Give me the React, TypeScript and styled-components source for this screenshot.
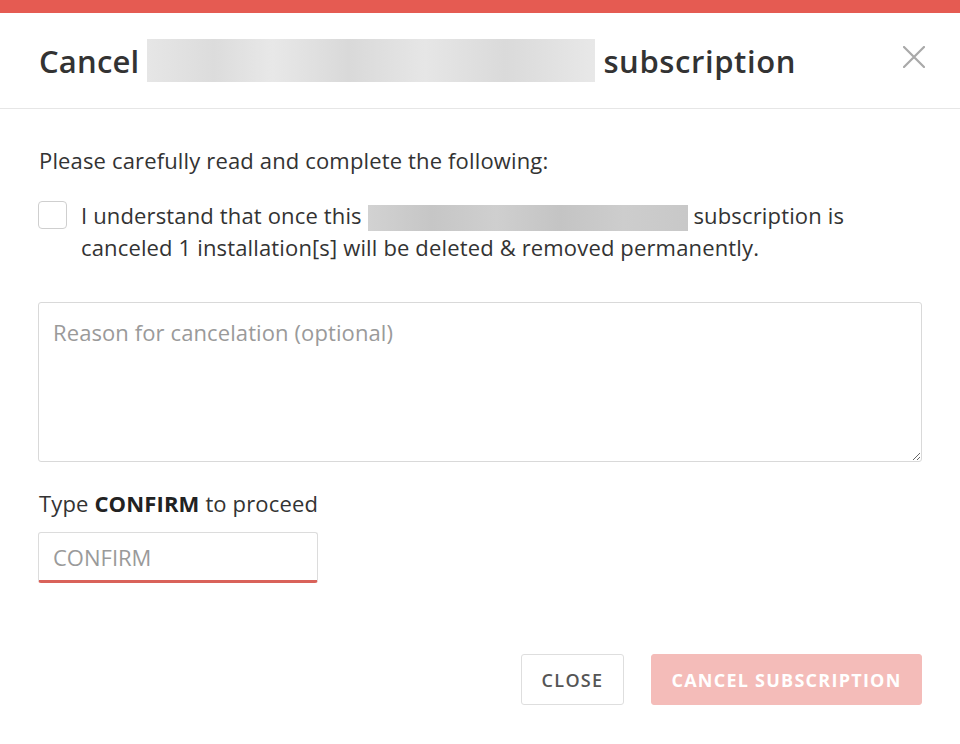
import React from "react";
import styled, { createGlobalStyle } from "styled-components";

const Global = createGlobalStyle`
  html, body { margin: 0; padding: 0; background: #ffffff; }
  body { font-family: "Open Sans", "Noto Sans", sans-serif; }
  * { box-sizing: border-box; }
`;

const Modal = styled.div`
  width: 960px;
  height: 744px;
  background: #fff;
  border-top: 13px solid #e55b52;
  display: flex;
  flex-direction: column;
  color: #333;
`;

const Header = styled.div`
  height: 96px;
  border-bottom: 1px solid #e6e6e6;
  display: flex;
  align-items: center;
  justify-content: space-between;
  padding: 0 34px 0 39px;
`;

const Title = styled.h1`
  margin: 0;
  font-size: 31px;
  font-weight: 600;
  color: #333;
  display: flex;
  align-items: center;
  gap: 8px;
  letter-spacing: 0.2px;
`;

const TitleWord = styled.span<{ $spacing?: number }>`
  letter-spacing: ${(p) => p.$spacing ?? 0.2}px;
`;

const Redacted = styled.span<{ $w: number; $h: number; $tone: "light" | "dark" }>`
  display: inline-block;
  width: ${(p) => p.$w}px;
  height: ${(p) => p.$h}px;
  vertical-align: middle;
  background: ${(p) =>
    p.$tone === "light"
      ? "linear-gradient(90deg, #e6e6e6 0%, #dcdcdc 15%, #e8e8e8 28%, #d9d9d9 45%, #e6e6e6 62%, #dadada 80%, #e8e8e8 100%)"
      : "linear-gradient(90deg, #d2d2d2 0%, #c6c6c6 20%, #cfcfcf 40%, #c4c4c4 60%, #cdcdcd 80%, #c8c8c8 100%)"};
  filter: blur(0.5px);
`;

const CloseX = styled.button`
  border: none;
  background: none;
  padding: 0;
  width: 24px;
  height: 24px;
  cursor: pointer;
  margin-top: -8px;
  display: flex;
  align-items: center;
  justify-content: center;
`;

const Body = styled.div`
  flex: 1;
  padding: 36px 38px 0 38px;
  display: flex;
  flex-direction: column;
`;

const Lead = styled.p`
  margin: 0 0 0 1px;
  font-size: 22px;
  line-height: 30px;
  letter-spacing: 0.15px;
  color: #333;
`;

const CheckRow = styled.label`
  margin-top: 25px;
  display: flex;
  align-items: flex-start;
  gap: 14px;
`;

const Box = styled.span`
  flex: none;
  width: 29px;
  height: 28px;
  border: 1px solid #cfcfcf;
  border-radius: 4px;
  margin-top: 1px;
  background: #fff;
`;

const CheckText = styled.span`
  font-size: 22px;
  line-height: 32px;
  letter-spacing: 0.15px;
  color: #333;
  margin-top: -1px;
`;

const Reason = styled.textarea`
  margin-top: 39px;
  width: 884px;
  height: 160px;
  border: 1px solid #d9d9d9;
  border-radius: 3px;
  padding: 14px 14px;
  font-family: "Open Sans", "Noto Sans", sans-serif;
  font-size: 22px;
  letter-spacing: 0.1px;
  color: #333;
  resize: vertical;
  outline: none;
  &::placeholder { color: #9a9a9a; }
`;

const Prompt = styled.p`
  margin: 26px 0 0 1px;
  font-size: 22px;
  line-height: 30px;
  letter-spacing: 0.15px;
  color: #333;
  b { font-weight: 700; color: #222; }
`;

const ConfirmInput = styled.input`
  margin-top: 14px;
  width: 280px;
  height: 51px;
  border: 1px solid #dcdcdc;
  border-bottom: 3px solid #d9625a;
  border-radius: 3px;
  padding: 0 14px;
  font-family: "Open Sans", "Noto Sans", sans-serif;
  font-size: 22px;
  color: #333;
  outline: none;
  &::placeholder { color: #9a9a9a; }
`;

const Footer = styled.div`
  display: flex;
  justify-content: flex-end;
  gap: 27px;
  padding: 0 38px 39px 0;
`;

const Button = styled.button<{ $primary?: boolean }>`
  height: 51px;
  padding: 0;
  border-radius: 3px;
  font-family: "Open Sans", "Noto Sans", sans-serif;
  font-size: 18px;
  letter-spacing: ${(p) => (p.$primary ? 1.25 : 1.3)}px;
  white-space: nowrap;
  text-transform: uppercase;
  font-weight: ${(p) => (p.$primary ? 700 : 600)};
  border: 1px solid ${(p) => (p.$primary ? "#f4bcb9" : "#dedede")};
  background: ${(p) => (p.$primary ? "#f4bcb9" : "#fff")};
  color: ${(p) => (p.$primary ? "#fff" : "#555")};
  width: ${(p) => (p.$primary ? 271 : 103)}px;
`;

export default function App() {
  return (
    <>
      <Global />
      <Modal>
        <Header>
          <Title>
            <TitleWord>Cancel</TitleWord>
            <Redacted $w={448} $h={43} $tone="light" />
            <TitleWord $spacing={0.6}>subscription</TitleWord>
          </Title>
          <CloseX aria-label="Close">
            <svg width="22" height="22" viewBox="0 0 22 22">
              <path d="M1 1 L21 21 M21 1 L1 21" stroke="#a9a9a9" strokeWidth="2.2" strokeLinecap="round" />
            </svg>
          </CloseX>
        </Header>
        <Body>
          <Lead>Please carefully read and complete the following:</Lead>
          <CheckRow>
            <Box />
            <CheckText>
              I understand that once this <Redacted $w={320} $h={26} $tone="dark" /> subscription is canceled 1
              installation[s] will be deleted &amp; removed permanently.
            </CheckText>
          </CheckRow>
          <Reason placeholder="Reason for cancelation (optional)" />
          <Prompt>
            Type <b>CONFIRM</b> to proceed
          </Prompt>
          <ConfirmInput placeholder="CONFIRM" />
        </Body>
        <Footer>
          <Button>Close</Button>
          <Button $primary>Cancel Subscription</Button>
        </Footer>
      </Modal>
    </>
  );
}
